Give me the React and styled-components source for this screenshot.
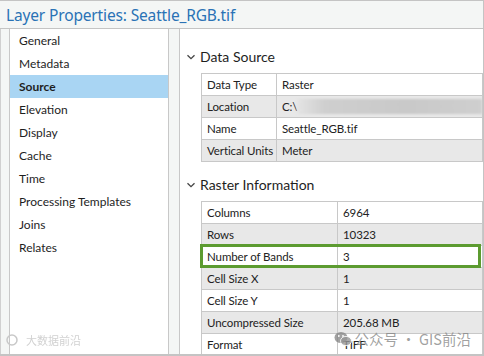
import React from "react";
import styled, { createGlobalStyle } from "styled-components";

const Global = createGlobalStyle`
  html, body { margin: 0; padding: 0; background: #ffffff; }
  body { font-family: Lato, "Noto Sans", "Noto Sans CJK SC", sans-serif; }
`;

const Window = styled.div`
  position: relative;
  width: 484px;
  height: 356px;
  box-sizing: border-box;
  border-top: 1px solid #c4c4c4;
  border-right: 1px solid #c4c4c4;
  border-bottom: 2px solid #c4c4c4;
  background: #f4f6f5;
  display: flex;
  flex-direction: column;
  overflow: hidden;
`;

const TitleBar = styled.div`
  height: 28px;
  box-sizing: border-box;
  padding-left: 6px;
  display: flex;
  align-items: center;
  border-bottom: 1px solid #c4c4c4;
  font-family: "Noto Sans", sans-serif;
  font-size: 15.5px;
  color: #2a72b5;
  letter-spacing: -0.15px;
`;

const Body = styled.div`
  flex: 1;
  display: flex;
  gap: 10px;
  padding-left: 8px;
  min-height: 0;
  border-left: 1px solid #d0d0d0;
`;

const Nav = styled.div`
  width: 160px;
  box-sizing: border-box;
  background: #fff;
  border-left: 1px solid #c8c8c8;
  border-right: 1px solid #c8c8c8;
  display: flex;
  flex-direction: column;
`;

const NavItem = styled.div`
  height: 23px;
  display: flex;
  align-items: center;
  padding-left: 9px;
  font-size: 12px;
  color: #1e1e1e;
  background: ${(p) => (p.$active ? "#a9d5f3" : "transparent")};
  font-weight: ${(p) => (p.$active ? 700 : 400)};
`;

const Main = styled.div`
  flex: 1;
  background: #fff;
  border-left: 1px solid #c8c8c8;
  padding: 19px 0 0 6px;
  display: flex;
  flex-direction: column;
  min-width: 0;
`;

const SectionHeader = styled.div`
  height: 22px;
  display: flex;
  align-items: center;
  gap: 4px;
  font-size: 14px;
  color: #1e1e1e;
  margin-top: ${(p) => p.$top || 0}px;
`;

const Chevron = styled.svg`
  width: 10px;
  height: 10px;
  flex: none;
`;

const Table = styled.div`
  margin: ${(p) => p.$mt}px 0 0 15px;
  display: grid;
  grid-template-columns: ${(p) => p.$label}px 1fr;
  border-top: 1px solid #c8c8c8;
  border-left: 1px solid #c8c8c8;
  position: relative;
`;

const Cell = styled.div`
  height: 21px;
  display: flex;
  align-items: center;
  padding-left: 5px;
  font-size: 11.5px;
  letter-spacing: -0.1px;
  color: #222;
  background: ${(p) => (p.$alt ? "#e8e8e8" : "#fff")};
  border-bottom: 1px solid #c8c8c8;
  border-right: 1px solid #c8c8c8;
  white-space: nowrap;
  overflow: hidden;
  position: relative;
`;

const Blur = styled.span`
  position: absolute;
  left: 20px;
  right: 0;
  top: 3px;
  bottom: 3px;
  background: linear-gradient(90deg, #e4e4e4 0%, #cfcfcf 15%, #c9c9c9 60%, #cfcfcf 100%);
  filter: blur(1px);
`;

const Highlight = styled.div`
  position: absolute;
  left: -2px;
  width: 281px;
  top: ${(p) => p.$top}px;
  height: 24px;
  box-sizing: border-box;
  border: 3px solid #5c9b30;
  pointer-events: none;
`;

const WatermarkRight = styled.div`
  position: absolute;
  right: 12px;
  bottom: 5px;
  display: flex;
  align-items: center;
  gap: 3px;
  font-family: "Noto Sans CJK SC", sans-serif;
  font-size: 14.5px;
  color: rgba(130, 130, 130, 0.75);
`;

const WatermarkLeft = styled.div`
  position: absolute;
  left: 6px;
  bottom: 6px;
  display: flex;
  align-items: center;
  gap: 4px;
  font-family: "Noto Sans CJK SC", sans-serif;
  font-size: 11px;
  color: rgba(190, 190, 190, 0.7);
  filter: blur(0.6px);
`;

const navItems = [
  "General",
  "Metadata",
  "Source",
  "Elevation",
  "Display",
  "Cache",
  "Time",
  "Processing Templates",
  "Joins",
  "Relates",
];

const dataSource = [
  ["Data Type", "Raster"],
  ["Location", "C:\\", true],
  ["Name", "Seattle_RGB.tif"],
  ["Vertical Units", "Meter"],
];

const rasterInfo = [
  ["Columns", "6964"],
  ["Rows", "10323"],
  ["Number of Bands", "3"],
  ["Cell Size X", "1"],
  ["Cell Size Y", "1"],
  ["Uncompressed Size", "205.68 MB"],
  ["Format", "TIFF"],
];

const ChevronIcon = () => (
  <Chevron viewBox="0 0 10 10">
    <path d="M1.5 3.2 L5 6.7 L8.5 3.2" fill="none" stroke="#444" strokeWidth="1.3" />
  </Chevron>
);

const Rows = ({ rows }) =>
  rows.map(([k, v, blur], i) => (
    <React.Fragment key={k}>
      <Cell $alt={i % 2 === 1}>{k}</Cell>
      <Cell $alt={i % 2 === 1}>
        {v}
        {blur && <Blur />}
      </Cell>
    </React.Fragment>
  ));

export default function App() {
  return (
    <>
      <Global />
      <Window>
        <TitleBar>Layer Properties: Seattle_RGB.tif</TitleBar>
        <Body>
          <Nav>
            {navItems.map((n) => (
              <NavItem key={n} $active={n === "Source"}>
                {n}
              </NavItem>
            ))}
          </Nav>
          <Main>
            <SectionHeader>
              <ChevronIcon />
              Data Source
            </SectionHeader>
            <Table $label={75} $mt={8}>
              <Rows rows={dataSource} />
            </Table>
            <SectionHeader $top={14}>
              <ChevronIcon />
              Raster Information
            </SectionHeader>
            <Table $label={136} $mt={8}>
              <Rows rows={rasterInfo} />
              <Highlight $top={42} />
            </Table>
          </Main>
        </Body>
        <WatermarkLeft>
          <svg width="16" height="12" viewBox="0 0 16 12">
            <circle cx="6" cy="6" r="5" fill="none" stroke="#c8c8c8" strokeWidth="1.5" />
          </svg>
          大数据前沿
        </WatermarkLeft>
        <WatermarkRight>
          <svg width="18" height="16" viewBox="0 0 18 16">
            <ellipse cx="7" cy="6.5" rx="6.5" ry="5.5" fill="rgba(130,130,130,0.75)" />
            <ellipse cx="12" cy="10" rx="5.5" ry="4.6" fill="rgba(150,150,150,0.8)" stroke="#fff" strokeWidth="0.8" />
            <circle cx="4.8" cy="5" r="0.9" fill="#fff" />
            <circle cx="9" cy="5" r="0.9" fill="#fff" />
          </svg>
          公众号 · GIS前沿
        </WatermarkRight>
      </Window>
    </>
  );
}
